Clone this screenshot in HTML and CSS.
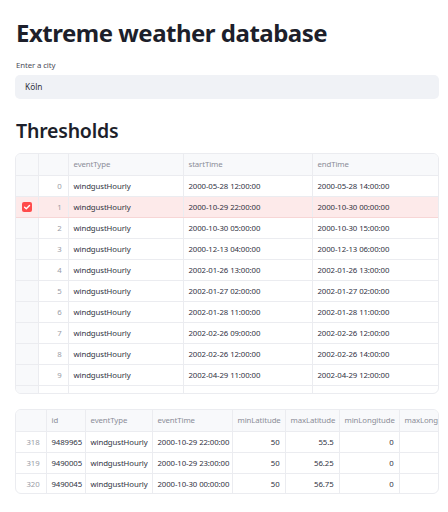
FILE: index.html
```html
<!DOCTYPE html>
<html>
<head>
<meta charset="utf-8">
<link rel="stylesheet" href="styles.css">
</head>
<body>
<main class="app">
  <h1 class="title">Extreme weather database</h1>
  <label class="field-label">Enter a city</label>
  <div class="text-input">Köln</div>
  <h2 class="subtitle">Thresholds</h2>

  <div class="grid grid-events">
    <table>
      <colgroup>
        <col style="width:22px"><col style="width:30px"><col style="width:115px"><col style="width:129px"><col style="width:128px">
      </colgroup>
      <thead>
        <tr><th class="sel"></th><th class="idx"></th><th>eventType</th><th>startTime</th><th>endTime</th></tr>
      </thead>
      <tbody>
        <tr><td class="sel"></td><td class="idx">0</td><td>windgustHourly</td><td>2000-05-28 12:00:00</td><td>2000-05-28 14:00:00</td></tr>
        <tr class="selected"><td class="sel"><span class="check"><svg viewBox="0 0 10 10" width="10" height="10"><path d="M2.6 5.2 L4.3 6.8 L7.5 3.5" fill="none" stroke="#fff" stroke-width="1.4" stroke-linecap="round" stroke-linejoin="round"/></svg></span></td><td class="idx">1</td><td>windgustHourly</td><td>2000-10-29 22:00:00</td><td>2000-10-30 00:00:00</td></tr>
        <tr><td class="sel"></td><td class="idx">2</td><td>windgustHourly</td><td>2000-10-30 05:00:00</td><td>2000-10-30 15:00:00</td></tr>
        <tr><td class="sel"></td><td class="idx">3</td><td>windgustHourly</td><td>2000-12-13 04:00:00</td><td>2000-12-13 06:00:00</td></tr>
        <tr><td class="sel"></td><td class="idx">4</td><td>windgustHourly</td><td>2002-01-26 13:00:00</td><td>2002-01-26 13:00:00</td></tr>
        <tr><td class="sel"></td><td class="idx">5</td><td>windgustHourly</td><td>2002-01-27 02:00:00</td><td>2002-01-27 02:00:00</td></tr>
        <tr><td class="sel"></td><td class="idx">6</td><td>windgustHourly</td><td>2002-01-28 11:00:00</td><td>2002-01-28 11:00:00</td></tr>
        <tr><td class="sel"></td><td class="idx">7</td><td>windgustHourly</td><td>2002-02-26 09:00:00</td><td>2002-02-26 12:00:00</td></tr>
        <tr><td class="sel"></td><td class="idx">8</td><td>windgustHourly</td><td>2002-02-26 12:00:00</td><td>2002-02-26 14:00:00</td></tr>
        <tr><td class="sel"></td><td class="idx">9</td><td>windgustHourly</td><td>2002-04-29 11:00:00</td><td>2002-04-29 12:00:00</td></tr>
        <tr class="peek"><td class="sel"></td><td class="idx">10</td><td>windgustHourly</td><td>2002-10-27 10:00:00</td><td>2002-10-27 14:00:00</td></tr>
      </tbody>
    </table>
  </div>

  <div class="grid grid-detail">
    <table>
      <colgroup>
        <col style="width:30px"><col style="width:39px"><col style="width:67px"><col style="width:80px"><col style="width:53px"><col style="width:54px"><col style="width:60px"><col style="width:60px">
      </colgroup>
      <thead>
        <tr><th class="idx"></th><th>id</th><th>eventType</th><th>eventTime</th><th>minLatitude</th><th>maxLatitude</th><th>minLongitude</th><th>maxLongitude</th></tr>
      </thead>
      <tbody>
        <tr><td class="idx">318</td><td>9489965</td><td>windgustHourly</td><td>2000-10-29 22:00:00</td><td class="num">50</td><td class="num">55.5</td><td class="num">0</td><td class="num">3</td></tr>
        <tr><td class="idx">319</td><td>9490005</td><td>windgustHourly</td><td>2000-10-29 23:00:00</td><td class="num">50</td><td class="num">56.25</td><td class="num">0</td><td class="num">3</td></tr>
        <tr><td class="idx">320</td><td>9490045</td><td>windgustHourly</td><td>2000-10-30 00:00:00</td><td class="num">50</td><td class="num">56.75</td><td class="num">0</td><td class="num">3</td></tr>
      </tbody>
    </table>
  </div>
</main>
</body>
</html>
```

FILE: styles.css
```css
* { box-sizing: border-box; }
html, body { margin: 0; padding: 0; background: #ffffff; }
body {
  font-family: "Noto Sans", "Open Sans", sans-serif;
  color: #31333f;
}
.app {
  width: 448px;
  padding: 0 9px 0 15px;
  display: flex;
  flex-direction: column;
}
.title {
  margin: 0;
  padding: 17px 0 0 1px;
  font-size: 24px;
  line-height: 32px;
  font-weight: 700;
  color: #1d1f2b;
  letter-spacing: -0.5px;
}
.field-label {
  margin-top: 11px;
  padding-left: 1px;
  font-size: 7.8px;
  line-height: 10px;
  color: #4a4c58;
  letter-spacing: -0.1px;
}
.text-input {
  margin-top: 5px;
  height: 24px;
  background: #f0f2f6;
  border-radius: 5px;
  padding-left: 10px;
  font-size: 8.3px;
  line-height: 24px;
  color: #31333f;
}
.subtitle {
  margin: 0;
  padding: 19px 0 0 1px;
  font-size: 19.5px;
  line-height: 26px;
  font-weight: 600;
  color: #1d1f2b;
  letter-spacing: -0.2px;
}
.grid {
  border: 1px solid #ebecf0;
  border-radius: 6px;
  overflow: hidden;
  background: #fff;
}
.grid-events {
  margin-top: 9px;
  height: 241px;
}
.grid-detail {
  margin-top: 15px;
  height: 85px;
}
table {
  border-collapse: collapse;
  table-layout: fixed;
  width: 100%;
  font-size: 7.8px;
  letter-spacing: -0.1px;
}
th, td {
  height: 21px;
  padding: 0 5px;
  text-align: left;
  white-space: nowrap;
  overflow: hidden;
  border-right: 1px solid #ebecf0;
  border-bottom: 1px solid #ebecf0;
  font-weight: 400;
}
th {
  background: #f8f9fb;
  color: #8b8d98;
}
td { color: #31333f; }
tr > :last-child { border-right: none; }
td.idx, th.idx {
  text-align: right;
  color: #9a9ca6;
  padding-right: 6px;
}
td.num { text-align: right; }
td.sel, th.sel {
  background: #f8f9fb;
  padding: 0;
  text-align: center;
}
tr.selected td { background: #fdeaea; border-bottom-color: #f7d6d6; }
tr.peek td { vertical-align: top; padding-top: 5px; }
.check {
  display: inline-flex;
  width: 10px;
  height: 10px;
  border-radius: 2px;
  background: #ff4b4b;
  vertical-align: middle;
}
.check svg { display: block; }
```
